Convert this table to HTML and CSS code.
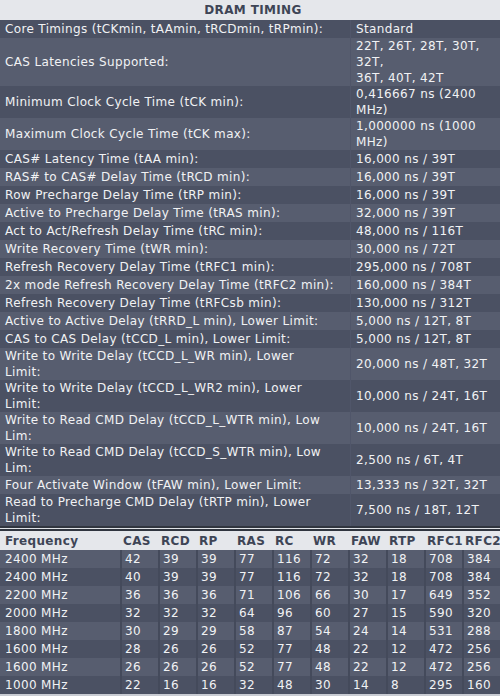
FILE: index.html
```html
<!DOCTYPE html>
<html>
<head>
<meta charset="utf-8">
<link rel="stylesheet" href="styles.css">
</head>
<body>
<div class="panel">
  <div class="title">DRAM TIMING</div>
  <table class="spd">
    <tr><td class="lbl">Core Timings (tCKmin, tAAmin, tRCDmin, tRPmin):</td><td class="val">Standard</td></tr>
    <tr><td class="lbl">CAS Latencies Supported:</td><td class="val">22T, 26T, 28T, 30T,<br>32T,<br>36T, 40T, 42T</td></tr>
    <tr><td class="lbl">Minimum Clock Cycle Time (tCK min):</td><td class="val">0,416667 ns (2400<br>MHz)</td></tr>
    <tr><td class="lbl">Maximum Clock Cycle Time (tCK max):</td><td class="val">1,000000 ns (1000<br>MHz)</td></tr>
    <tr><td class="lbl">CAS# Latency Time (tAA min):</td><td class="val">16,000 ns / 39T</td></tr>
    <tr><td class="lbl">RAS# to CAS# Delay Time (tRCD min):</td><td class="val">16,000 ns / 39T</td></tr>
    <tr><td class="lbl">Row Precharge Delay Time (tRP min):</td><td class="val">16,000 ns / 39T</td></tr>
    <tr><td class="lbl">Active to Precharge Delay Time (tRAS min):</td><td class="val">32,000 ns / 39T</td></tr>
    <tr><td class="lbl">Act to Act/Refresh Delay Time (tRC min):</td><td class="val">48,000 ns / 116T</td></tr>
    <tr><td class="lbl">Write Recovery Time (tWR min):</td><td class="val">30,000 ns / 72T</td></tr>
    <tr><td class="lbl">Refresh Recovery Delay Time (tRFC1 min):</td><td class="val">295,000 ns / 708T</td></tr>
    <tr><td class="lbl">2x mode Refresh Recovery Delay Time (tRFC2 min):</td><td class="val">160,000 ns / 384T</td></tr>
    <tr><td class="lbl">Refresh Recovery Delay Time (tRFCsb min):</td><td class="val">130,000 ns / 312T</td></tr>
    <tr><td class="lbl">Active to Active Delay (tRRD_L min), Lower Limit:</td><td class="val">5,000 ns / 12T, 8T</td></tr>
    <tr><td class="lbl">CAS to CAS Delay (tCCD_L min), Lower Limit:</td><td class="val">5,000 ns / 12T, 8T</td></tr>
    <tr><td class="lbl">Write to Write Delay (tCCD_L_WR min), Lower<br>Limit:</td><td class="val">20,000 ns / 48T, 32T</td></tr>
    <tr><td class="lbl">Write to Write Delay (tCCD_L_WR2 min), Lower<br>Limit:</td><td class="val">10,000 ns / 24T, 16T</td></tr>
    <tr><td class="lbl">Write to Read CMD Delay (tCCD_L_WTR min), Low<br>Lim:</td><td class="val">10,000 ns / 24T, 16T</td></tr>
    <tr><td class="lbl">Write to Read CMD Delay (tCCD_S_WTR min), Low<br>Lim:</td><td class="val">2,500 ns / 6T, 4T</td></tr>
    <tr><td class="lbl">Four Activate Window (tFAW min), Lower Limit:</td><td class="val">13,333 ns / 32T, 32T</td></tr>
    <tr><td class="lbl">Read to Precharge CMD Delay (tRTP min), Lower<br>Limit:</td><td class="val">7,500 ns / 18T, 12T</td></tr>
  </table>
  <div class="sep"></div>
  <table class="freq">
    <colgroup>
      <col class="c-freq">
      <col span="10" class="c-num">
    </colgroup>
    <thead>
      <tr><th class="fcol">Frequency</th><th>CAS</th><th>RCD</th><th>RP</th><th>RAS</th><th>RC</th><th>WR</th><th>FAW</th><th>RTP</th><th>RFC1</th><th>RFC2</th></tr>
    </thead>
    <tbody>
      <tr><td class="fcol">2400 MHz</td><td>42</td><td>39</td><td>39</td><td>77</td><td>116</td><td>72</td><td>32</td><td>18</td><td>708</td><td>384</td></tr>
      <tr><td class="fcol">2400 MHz</td><td>40</td><td>39</td><td>39</td><td>77</td><td>116</td><td>72</td><td>32</td><td>18</td><td>708</td><td>384</td></tr>
      <tr><td class="fcol">2200 MHz</td><td>36</td><td>36</td><td>36</td><td>71</td><td>106</td><td>66</td><td>30</td><td>17</td><td>649</td><td>352</td></tr>
      <tr><td class="fcol">2000 MHz</td><td>32</td><td>32</td><td>32</td><td>64</td><td>96</td><td>60</td><td>27</td><td>15</td><td>590</td><td>320</td></tr>
      <tr><td class="fcol">1800 MHz</td><td>30</td><td>29</td><td>29</td><td>58</td><td>87</td><td>54</td><td>24</td><td>14</td><td>531</td><td>288</td></tr>
      <tr><td class="fcol">1600 MHz</td><td>28</td><td>26</td><td>26</td><td>52</td><td>77</td><td>48</td><td>22</td><td>12</td><td>472</td><td>256</td></tr>
      <tr><td class="fcol">1600 MHz</td><td>26</td><td>26</td><td>26</td><td>52</td><td>77</td><td>48</td><td>22</td><td>12</td><td>472</td><td>256</td></tr>
      <tr><td class="fcol">1000 MHz</td><td>22</td><td>16</td><td>16</td><td>32</td><td>48</td><td>30</td><td>14</td><td>8</td><td>295</td><td>160</td></tr>
    </tbody>
  </table>
</div>
</body>
</html>
```
FILE: styles.css
```css
html, body {
  margin: 0;
  padding: 0;
  background: #4c5264;
}
body {
  font-family: "DejaVu Sans", Verdana, sans-serif;
  font-size: 12px;
  letter-spacing: 0.35px;
  color: #f1f2f4;
}
.panel {
  width: 500px;
}
.title {
  height: 20px;
  line-height: 20px;
  padding-left: 6px;
  background: #e5e7eb;
  color: #3e4556;
  font-weight: bold;
  text-align: center;
}
.spd {
  width: 100%;
  border-collapse: collapse;
  border-spacing: 0;
  table-layout: fixed;
}
.spd td {
  padding: 0 0 0 5px;
  height: 18px;
  line-height: 16px;
  vertical-align: middle;
  white-space: nowrap;
  overflow: hidden;
}
.spd tr:nth-child(odd) td {
  background: #4b5163;
}
.spd tr:nth-child(even) td {
  background: #575d6f;
}
.spd td.lbl {
  width: 345px;
  border-right: 1px solid #50566a;
}
.sep {
  height: 1px;
  background: #dfe2e7;
  border-top: 2px solid #30353f;
  border-bottom: 2px solid #30353f;
}
.freq {
  width: 500px;
  border-collapse: separate;
  border-spacing: 0;
  table-layout: fixed;
  border-bottom: 2px solid #c9ccd3;
}
.c-freq {
  width: 120px;
}
.c-num {
  width: 38px;
}
.freq th {
  background: #e5e7eb;
  color: #3e4556;
  font-weight: bold;
  text-align: left;
  height: 19px;
  padding: 0 0 0 3px;
  white-space: nowrap;
}
.freq th.fcol {
  padding-left: 5px;
}
.freq td {
  height: 18px;
  padding: 0 0 0 3px;
  border-left: 2px solid #444a5b;
  white-space: nowrap;
}
.freq td.fcol {
  border-left: 0;
  padding-left: 5px;
}
.freq tbody tr:nth-child(odd) td {
  background: #575d6f;
}
.freq tbody tr:nth-child(even) td {
  background: #4b5163;
}
```
